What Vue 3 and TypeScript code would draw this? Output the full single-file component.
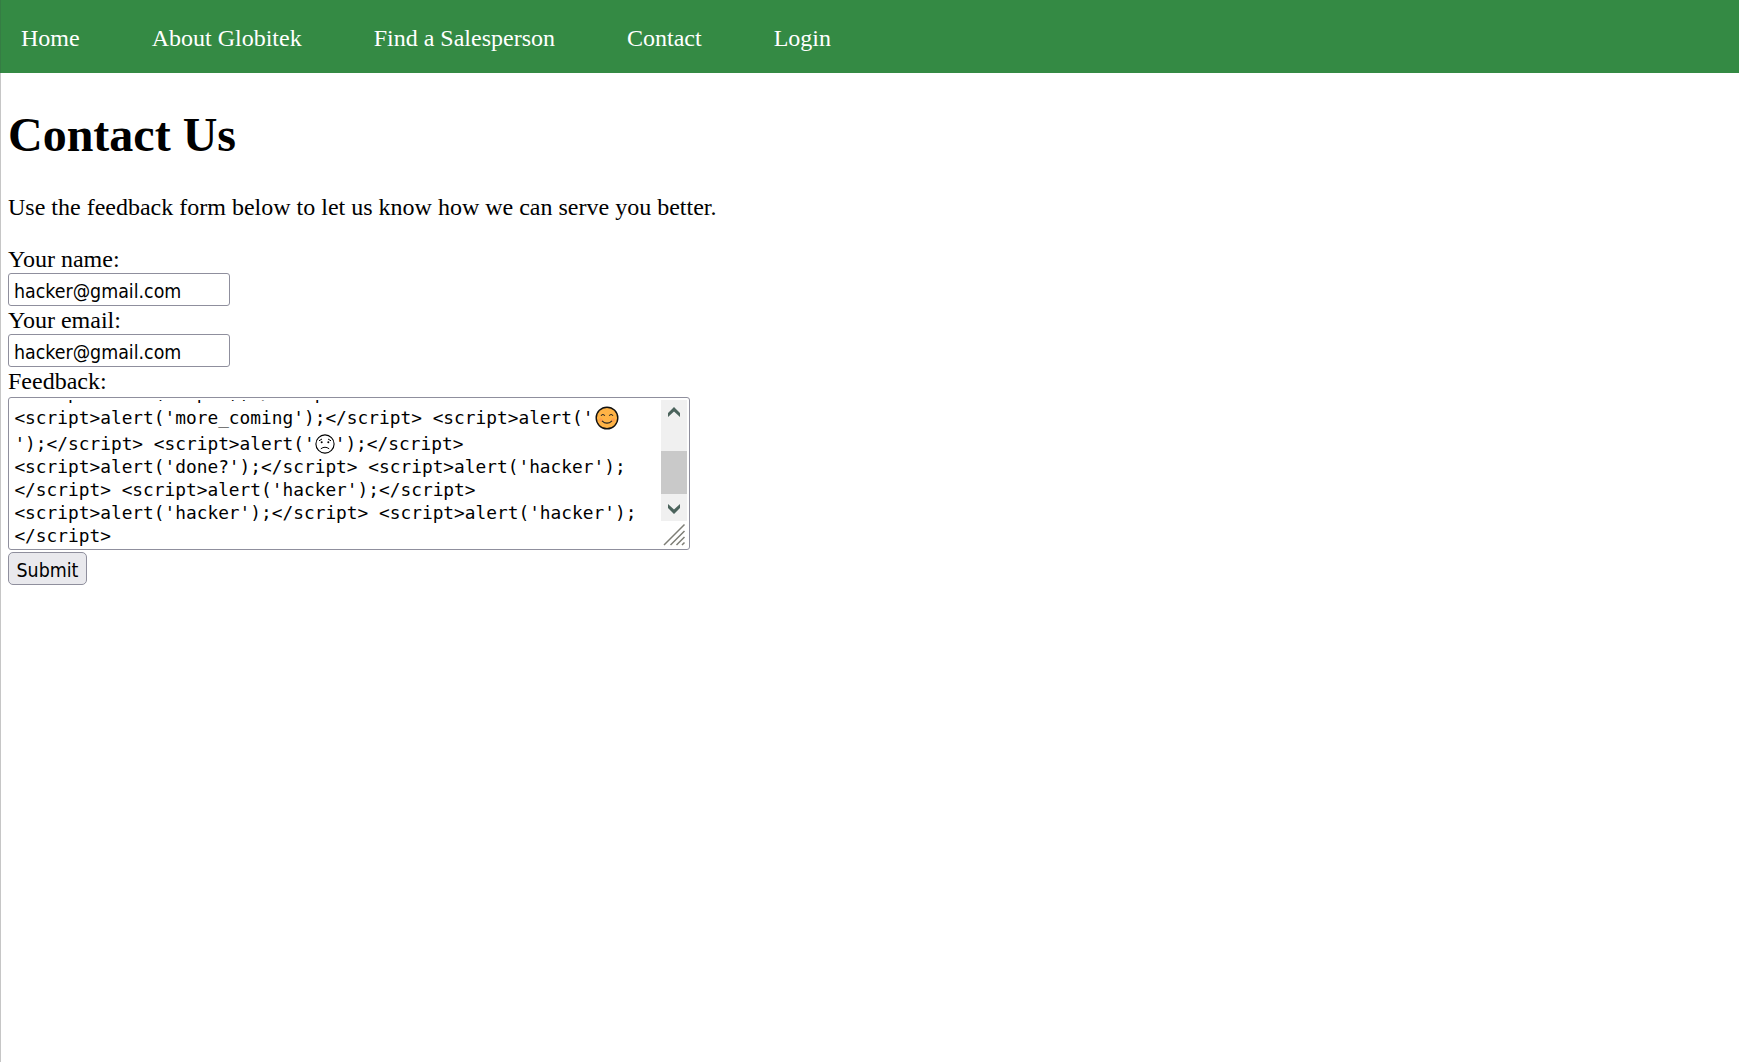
<script setup lang="ts">
const links: string[] = ['Home', 'About Globitek', 'Find a Salesperson', 'Contact', 'Login']
const email = 'hacker@gmail.com'
const s = (value: string): string => `<script>alert('${value}');<\/script>`
const close = '<\/script>'
const lines: string[] = [
  `${s('done?')} <script>alert('hacker');`,
  `${close} ${s('hacker')}`,
  `${s('hacker')} <script>alert('hacker');`,
  close,
]
</script>

<template>
  <div class="page">
    <nav class="nav">
      <a v-for="link in links" :key="link">{{ link }}</a>
    </nav>
    <main>
      <h1>Contact Us</h1>
      <p class="intro">Use the feedback form below to let us know how we can serve you better.</p>
      <form @submit.prevent>
        <label>Your name:</label>
        <input type="text" :value="email" />
        <label>Your email:</label>
        <input type="text" :value="email" />
        <label>Feedback:</label>
        <div class="area">
          <div class="text">
            <div class="line clipped">{{ s('nope') }}</div>
            <div class="line first">{{ s('more_coming') }} &lt;script&gt;alert('<svg class="smile" viewBox="0 0 24 24">
                <circle cx="12" cy="12" r="10.8" fill="#ffb346" stroke="#111" stroke-width="1.4" />
                <circle cx="5.8" cy="14" r="1.8" fill="#ff9d4c" />
                <circle cx="18.2" cy="14" r="1.8" fill="#ff9d4c" />
                <path d="M6 9.8Q7.9 7.2 9.8 9.8M14.2 9.8Q16.1 7.2 18 9.8M7 14.8Q12 19.6 17 14.8" fill="none" stroke="#222" stroke-width="1.1" />
              </svg></div>
            <div class="line second">');{{ close }} &lt;script&gt;alert('<svg class="sad" viewBox="0 0 20 20">
                <circle cx="10" cy="10" r="9.1" fill="none" stroke="#000" stroke-width="1.1" />
                <path d="M4 6.8L7 5M16 6.8L13 5M5.8 14.8Q10 11.7 14.2 14.8" fill="none" stroke="#000" stroke-width="1" />
                <circle cx="6.7" cy="8.3" r="1" />
                <circle cx="13.3" cy="8.3" r="1" />
              </svg>');{{ close }}</div>
            <div v-for="(line, i) in lines" :key="i" class="line">{{ line }}</div>
          </div>
          <div class="side">
            <div class="track">
              <svg viewBox="0 0 26 22"><path d="M7 17V13L13 7L19 13V17L13 11.5Z" fill="#4b635c" /></svg>
              <div class="thumb"></div>
              <svg viewBox="0 0 26 22"><path d="M7 5V9L13 15L19 9V5L13 10.5Z" fill="#4b635c" /></svg>
            </div>
            <svg class="grip" viewBox="0 0 26 27"><path d="M3 24L23.5 3.5M9.5 24L23.5 10M15.5 24L23.5 16M21 24L23.5 21.5" stroke="#7e7e76" stroke-width="1.5" fill="none" /></svg>
          </div>
        </div>
        <button type="submit">Submit</button>
      </form>
    </main>
  </div>
</template>

<style>
body {
  margin: 0;
  background: #fff;
}
</style>

<style scoped>
.page {
  box-sizing: border-box;
  min-height: 1062px;
  border-left: 1px solid #c6c6c6;
  font: 24px/27px "Liberation Serif", "Times New Roman", serif;
  color: #000;
}
.nav {
  display: flex;
  gap: 72px;
  box-sizing: border-box;
  height: 73px;
  margin-left: -1px;
  padding: 25px 0 0 20px;
  border-left: 1px solid #357d44;
  background: #348a44;
  color: #fff;
}
main {
  padding-left: 7px;
}
h1 {
  margin: 34px 0 0;
  font-size: 48px;
  line-height: 55px;
}
.intro {
  margin: 32px 0 25px;
}
form {
  display: flex;
  flex-direction: column;
  align-items: flex-start;
}
label {
  height: 27px;
}
input {
  box-sizing: border-box;
  width: 222px;
  height: 33px;
  margin: 0 0 1px;
  padding: 4px 5px 0;
  border: 1px solid #8f8f9d;
  border-radius: 3px;
  background: #fff;
  color: #000;
  font: 19.4px "DejaVu Sans Condensed", "DejaVu Sans", sans-serif;
  font-stretch: condensed;
}
.area {
  display: flex;
  box-sizing: border-box;
  width: 682px;
  height: 153px;
  margin-top: 2px;
  padding: 2px;
  border: 1px solid #8f8f9d;
  border-radius: 3px;
}
.text {
  flex: 1;
  overflow: hidden;
  padding-left: 3.4px;
  font: 17.82px/23px "DejaVu Sans Mono", monospace;
  white-space: pre;
}
.line {
  height: 23px;
}
.clipped {
  margin-top: -19px;
}
.first {
  height: 26px;
  line-height: 27px;
}
.second {
  height: 25px;
  line-height: 28px;
}
.smile {
  width: 24px;
  height: 24px;
  margin-left: 1.5px;
  vertical-align: -6px;
}
.sad {
  width: 20px;
  height: 20px;
  vertical-align: -4px;
}
.side {
  width: 26px;
}
.track {
  display: flex;
  flex-direction: column;
  height: 121px;
  background: #f0f0f0;
}
.track svg {
  display: block;
  width: 26px;
  height: 22px;
}
.thumb {
  height: 43px;
  margin: 29px 0 5px;
  background: #c9c9c9;
}
.grip {
  display: block;
  width: 26px;
  height: 27px;
}
button {
  box-sizing: border-box;
  width: 79px;
  height: 33px;
  margin: 2px 0 0;
  padding: 4px 0 0;
  border: 1px solid #8f8f9d;
  border-radius: 5px;
  background: #e9e9ed;
  color: #000;
  font: 19.4px "DejaVu Sans Condensed", "DejaVu Sans", sans-serif;
  font-stretch: condensed;
}
</style>
